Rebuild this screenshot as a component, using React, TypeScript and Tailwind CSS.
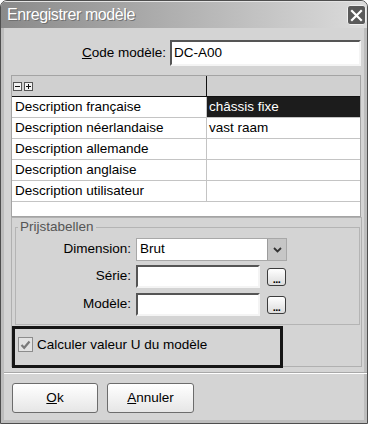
export default function App() {
  const rows = [
    { label: 'Description française', value: 'châssis fixe', selected: true },
    { label: 'Description néerlandaise', value: 'vast raam' },
    { label: 'Description allemande', value: '' },
    { label: 'Description anglaise', value: '' },
    { label: 'Description utilisateur', value: '' },
  ];

  return (
    <div className="w-[368px] h-[424px] bg-[#d4d4d4] flex flex-col overflow-hidden rounded-t-[7px] border border-[#4e4e4e] font-['Liberation_Sans',Arial,sans-serif] text-[13.5px] text-black">
      {/* title bar */}
      <div className="h-[27px] shrink-0 flex items-center justify-between pl-[6px] pr-[1px] bg-gradient-to-r from-[#8a8a8a] via-[#b2b2b2] to-[#dcdcdc] border-t border-[#e4e4e4]">
        <span className="text-white text-[16px] tracking-[-0.4px] leading-none [text-shadow:1px_1px_0_#707070]">Enregistrer modèle</span>
        <div className="w-[19px] h-[20px] rounded-[3px] bg-[#5a5a5a] border border-[#f0f0f0] flex items-center justify-center">
          <svg width="13" height="13" viewBox="0 0 13 13">
            <path d="M2 2L11 11M11 2L2 11" stroke="white" strokeWidth="2.2" strokeLinecap="square" />
          </svg>
        </div>
      </div>

      {/* body */}
      <div className="flex-1 flex flex-col border-x-[3px] border-b-[3px] border-[#bdbdbd] pl-[3px]">
        {/* code row */}
        <div className="flex items-center mt-[12px] pl-[4px]">
          <span className="w-[159px] text-right pr-[4px]"><u>C</u>ode modèle:</span>
          <div className="w-[191px] h-[26px] bg-white border-2 border-t-[#555] border-l-[#555] border-b-[#f4f4f4] border-r-[#f4f4f4] flex items-center pl-[2px]">
            DC-A00
          </div>
        </div>

        {/* property grid */}
        <div className="mt-[9px] ml-[4px] w-[350px] h-[142px] bg-white border border-[#a4a4a4] flex flex-col">
          <div className="h-[21px] shrink-0 bg-[#d0d0d0] border-b border-[#111] grid grid-cols-[195px_1fr]">
            <div className="border-r border-[#111] flex items-center gap-[2px] pl-[1px]">
              <span className="w-[9px] h-[9px] border border-[#555] bg-[#f2f2f2] flex items-center justify-center">
                <svg width="7" height="7" viewBox="0 0 7 7"><path d="M1 3.5H6" stroke="#111" strokeWidth="1" /></svg>
              </span>
              <span className="w-[9px] h-[9px] border border-[#555] bg-[#f2f2f2] flex items-center justify-center">
                <svg width="7" height="7" viewBox="0 0 7 7"><path d="M1 3.5H6M3.5 1V6" stroke="#111" strokeWidth="1" /></svg>
              </span>
            </div>
            <div />
          </div>
          {rows.map((r) => (
            <div key={r.label} className="h-[21px] shrink-0 grid grid-cols-[195px_1fr] border-b border-[#c4c4c4]">
              <div className="border-r border-[#c4c4c4] pl-[3px] flex items-center">{r.label}</div>
              <div className={`pl-[2px] flex items-center ${r.selected ? 'bg-[#1c1c1c] text-white' : ''}`}>{r.value}</div>
            </div>
          ))}
        </div>

        {/* prijstabellen panel */}
        <div className="ml-[4px] w-[351px] h-[150px] shrink-0 border border-[#b0b0b0] flex flex-col">
          <fieldset className="mt-[1px] ml-[3px] mr-[1px] border border-[#b4b4b4] pb-[8px]">
            <legend className="ml-[2px] px-[2px] text-[#555] leading-[16px]">Prijstabellen</legend>
            <div className="grid grid-cols-[115px_1fr] gap-x-[5px] mt-[3px] items-center">
              <span className="text-right">Dimension:</span>
              <div className="w-[151px] h-[23px] bg-white border border-[#a8a8a8] flex">
                <span className="flex-1 flex items-center pl-[3px]">Brut</span>
                <span className="w-[19px] bg-[#c6c6c6] border-l border-[#9c9c9c] flex items-center justify-center">
                  <svg width="9" height="6" viewBox="0 0 9 6"><path d="M1 1L4.5 4.5L8 1" fill="none" stroke="#333" strokeWidth="1.8" /></svg>
                </span>
              </div>

              <span className="text-right mt-[4px]">Série:</span>
              <div className="flex items-center gap-[7px] mt-[4px]">
                <div className="w-[124px] h-[23px] bg-white border-2 border-t-[#555] border-l-[#555] border-b-[#f4f4f4] border-r-[#f4f4f4]" />
                <div className="w-[19px] h-[18px] rounded-[3px] border border-[#3c3c3c] bg-gradient-to-b from-white to-[#dcdcdc] flex items-end justify-center text-[11px] font-bold leading-[12px] tracking-[-0.5px]">...</div>
              </div>

              <span className="text-right mt-[5px]">Modèle:</span>
              <div className="flex items-center gap-[7px] mt-[5px]">
                <div className="w-[124px] h-[23px] bg-white border-2 border-t-[#555] border-l-[#555] border-b-[#f4f4f4] border-r-[#f4f4f4]" />
                <div className="w-[19px] h-[18px] rounded-[3px] border border-[#3c3c3c] bg-gradient-to-b from-white to-[#dcdcdc] flex items-end justify-center text-[11px] font-bold leading-[12px] tracking-[-0.5px]">...</div>
              </div>
            </div>
          </fieldset>

          {/* checkbox, framed by the annotation box */}
          <div className="mt-[1px] w-[271px] h-[42px] shrink-0 border-[3px] border-[#151515] flex items-start pt-[8px] pl-[3px] gap-[4px]">
            <span className="w-[15px] h-[15px] border border-[#8c8c8c] bg-[#e2e2e2] flex items-center justify-center">
              <svg width="11" height="10" viewBox="0 0 11 10"><path d="M1.5 5L4.2 7.8L9.5 1.5" fill="none" stroke="#7a7a7a" strokeWidth="2.2" /></svg>
            </span>
            <span className="leading-[15px]">Calculer valeur U du modèle</span>
          </div>
        </div>

        {/* separator */}
        <div className="mt-[5px] -mx-[3px] h-[2px] shrink-0 border-t border-[#a8a8a8] border-b border-b-white" />

        {/* buttons */}
        <div className="mt-[9px] ml-[5px] flex gap-[9px]">
          <button className="w-[86px] h-[30px] rounded-[3px] border border-[#6c6c6c] bg-gradient-to-b from-white to-[#e6e6e6] text-[13.5px]"><u>O</u>k</button>
          <button className="w-[87px] h-[30px] rounded-[3px] border border-[#6c6c6c] bg-gradient-to-b from-white to-[#e6e6e6] text-[13.5px]"><u>A</u>nnuler</button>
        </div>
      </div>
    </div>
  );
}
